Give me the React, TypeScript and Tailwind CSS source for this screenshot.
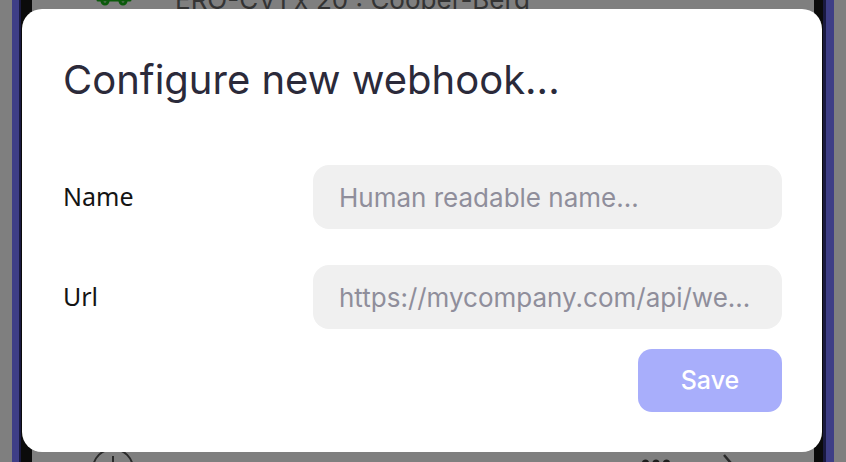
import React from "react";

const Backdrop = () => {
  return (
    <div className="flex h-[462px] w-[846px] bg-[#7f7f7f]">
      <div className="w-[12px] shrink-0 bg-[#7f7f7f]" />
      <div className="w-[7px] shrink-0 bg-[#3e3e86]" />
      <div className="w-[2px] shrink-0 bg-[#1a1a40]" />
      <div className="w-[11px] shrink-0 bg-[#0b0b0b]" />
      <div className="flex flex-1 flex-col justify-between bg-[#7f7f7f]">
        <div className="-mt-[16px] flex items-start pl-[62px]">
          <svg width="40" height="22" viewBox="0 0 40 22" fill="none">
            <path
              d="M4 10 L8 2 H32 L36 10 V16 H4 Z"
              stroke="#0b5a0b"
              strokeWidth="3"
              strokeLinejoin="round"
            />
            <circle cx="11" cy="17" r="3" stroke="#0b5a0b" strokeWidth="3" />
            <circle cx="29" cy="17" r="3" stroke="#0b5a0b" strokeWidth="3" />
          </svg>
          <span className="ml-[41px] mt-[3px] font-['Inter',sans-serif] text-[26px] leading-[26px] text-[#343434]">
            ERO-CV1 x'20 : Cooper-Berg
          </span>
        </div>
        <div className="-mb-[30px] flex items-center pl-[58px] pr-[74px]">
          <svg width="46" height="46" viewBox="0 0 46 46" fill="none">
            <circle cx="23" cy="23" r="20" stroke="#2a2a2a" strokeWidth="2" />
            <path d="M23 10 V24" stroke="#2a2a2a" strokeWidth="2" />
          </svg>
          <div className="flex-1" />
          <svg width="28" height="46" viewBox="0 0 28 46" fill="#1e1e1e">
            <circle cx="3.5" cy="17" r="3.5" />
            <circle cx="14" cy="17" r="3.5" />
            <circle cx="24.5" cy="17" r="3.5" />
          </svg>
          <svg className="ml-[50px]" width="20" height="36" viewBox="0 0 20 36" fill="none">
            <path d="M4 4 L16 18 L4 32" stroke="#2a2a2a" strokeWidth="2.5" />
          </svg>
        </div>
      </div>
      <div className="w-[9px] shrink-0 bg-[#0b0b0b]" />
      <div className="w-[3px] shrink-0 bg-[#1a1a40]" />
      <div className="w-[8px] shrink-0 bg-[#3e3e86]" />
      <div className="w-[12px] shrink-0 bg-[#7f7f7f]" />
    </div>
  );
};

const Field = ({ label, placeholder }: { label: string; placeholder: string }) => {
  return (
    <div className="flex items-center">
      <label className="w-[250px] shrink-0 font-['Noto_Sans',sans-serif] text-[25px] text-[#141414]">
        {label}
      </label>
      <input
        className="h-[64px] min-w-0 flex-1 rounded-[16px] bg-[#f0f0f0] px-[26px] font-['Inter',sans-serif] text-[26px] text-[#2b2a3a] outline-none placeholder:text-[#8f8e9b]"
        placeholder={placeholder}
      />
    </div>
  );
};

export default function App() {
  return (
    <div className="relative h-[462px] w-[846px] overflow-hidden">
      <Backdrop />
      <div className="absolute left-[22px] top-[9px] flex w-[800px] flex-col rounded-[20px] bg-white pb-[40px] pl-[41px] pr-[40px] pt-[49px]">
        <h1 className="font-['Inter',sans-serif] text-[40px] font-normal leading-[44px] text-[#2b2a3a]">
          Configure new webhook...
        </h1>
        <div className="mt-[63px] flex flex-col gap-[36px]">
          <Field label="Name" placeholder="Human readable name..." />
          <Field label="Url" placeholder="https://mycompany.com/api/we..." />
        </div>
        <div className="mt-[20px] flex justify-end">
          <button className="h-[63px] w-[144px] rounded-[14px] bg-[#a8aefb] font-['Inter',sans-serif] text-[25px] font-medium text-white">
            Save
          </button>
        </div>
      </div>
    </div>
  );
}
